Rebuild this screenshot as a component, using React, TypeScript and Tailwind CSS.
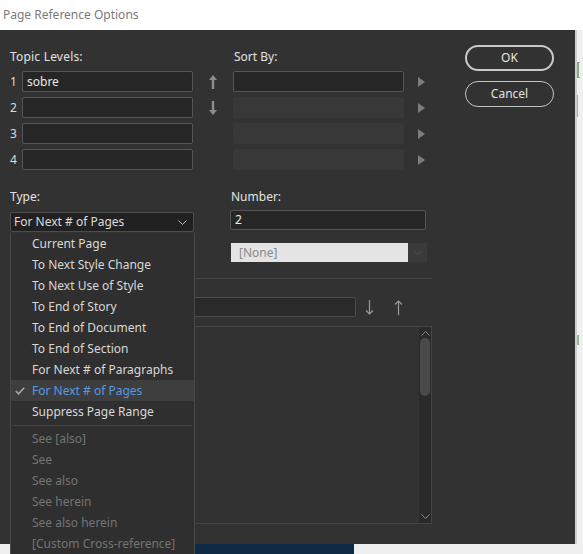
import { Fragment } from 'react';

const FONT = { fontFamily: '"Noto Sans", "Open Sans", sans-serif' };

const MENU_ITEMS = [
  'Current Page',
  'To Next Style Change',
  'To Next Use of Style',
  'To End of Story',
  'To End of Document',
  'To End of Section',
  'For Next # of Paragraphs',
  'For Next # of Pages',
  'Suppress Page Range',
];

const DISABLED_ITEMS = ['See [also]', 'See', 'See also', 'See herein', 'See also herein', '[Custom Cross-reference]'];

function ThickArrow({ up }: { up: boolean }) {
  return (
    <svg width="8" height="14" viewBox="0 0 8 14" className={up ? '' : 'rotate-180'}>
      <polygon points="0,5 4,0 8,5" fill="#8c8c8c" />
      <rect x="2.8" y="4" width="2.4" height="10" fill="#8c8c8c" />
    </svg>
  );
}

function ThinArrow({ up }: { up: boolean }) {
  return (
    <svg width="9" height="15" viewBox="0 0 9 15" className={up ? '' : 'rotate-180'}>
      <path d="M4.5 1 V15 M1 4.5 L4.5 1 L8 4.5" stroke="#9a9a9a" strokeWidth="1.2" fill="none" />
    </svg>
  );
}

function RightTriangle() {
  return (
    <svg width="7" height="10" viewBox="0 0 7 10">
      <polygon points="0,0 7,5 0,10" fill="#7c7c7c" />
    </svg>
  );
}

function Chevron({ color = '#bdbdbd', up = false }: { color?: string; up?: boolean }) {
  return (
    <svg width="9" height="5" viewBox="0 0 9 5" className={up ? 'rotate-180' : ''}>
      <path d="M0.5 0.5 L4.5 4.5 L8.5 0.5" stroke={color} strokeWidth="1" fill="none" />
    </svg>
  );
}

export default function App() {
  return (
    <div className="relative w-[583px] h-[554px] overflow-hidden bg-[#f0f0f0] text-[12px] leading-[16px]" style={FONT}>
      {/* title bar */}
      <div className="h-[30px] bg-white flex items-center pl-[3px] text-[#7a7a7a]">Page Reference Options</div>

      <div className="flex">
        {/* dialog body */}
        <div className="w-[575px] h-[514px] bg-[#323232] flex pt-[15px]">
          <div className="ml-[10px] w-[422px] pt-[4px] text-[#e2e2e2]">
            <div className="flex h-[16px]">
              <span className="w-[224px] tracking-[0.2px]">Topic Levels:</span>
              <span>Sort By:</span>
            </div>

            <div className="mt-[6px] flex flex-col gap-[5px]">
              {[1, 2, 3, 4].map((n) => (
                <div key={n} className="flex items-center h-[21px]">
                  <span className="w-[12px] text-[#dcdcdc]">{n}</span>
                  <div className="w-[171px] h-[21px] bg-[#262626] border border-[#565656] rounded-[2px] px-[4px] flex items-center text-[#e8e8e8]">
                    {n === 1 ? 'sobre' : ''}
                  </div>
                  <div className="w-[40px] flex justify-center">
                    {n === 1 && <ThickArrow up />}
                    {n === 2 && <ThickArrow up={false} />}
                  </div>
                  {n === 1 ? (
                    <div className="w-[171px] h-[21px] bg-[#262626] border border-[#565656] rounded-[2px]" />
                  ) : (
                    <div className="w-[171px] h-[21px] bg-[#383838] rounded-[2px]" />
                  )}
                  <div className="ml-[14px]">
                    <RightTriangle />
                  </div>
                </div>
              ))}
            </div>

            <div className="mt-[19px] flex">
              <div className="w-[220px]">
                <div className="h-[16px]">Type:</div>
                <div className="mt-[7px] w-[184px] h-[20px] bg-[#212121] border border-[#4c4c4c] rounded-[2px] flex items-center justify-between pl-[3px] pr-[6px] text-[#dcdcdc]">
                  <span>For Next # of Pages</span>
                  <Chevron />
                </div>
              </div>
              <div>
                <div className="h-[16px] pl-[1px]">Number:</div>
                <div className="mt-[5px] w-[196px] h-[20px] bg-[#262626] border border-[#565656] rounded-[2px] px-[4px] flex items-center text-[#f0f0f0]">
                  2
                </div>
              </div>
            </div>

            <div className="mt-[11px] ml-[221px] flex h-[19px] w-[196px]">
              <div className="flex-1 bg-[#e4e4e4] text-[#8a8a8a] flex items-center pl-[8px]">[None]</div>
              <div className="w-[19px] bg-[#3a3a3a] flex items-center justify-center">
                <Chevron color="#4e4e4e" />
              </div>
            </div>

            <div className="mt-[16px] h-px bg-[#424242]" />

            <div className="mt-[18px] flex items-center h-[20px]">
              <div className="w-[346px] h-[20px] bg-[#2a2a2a] border border-[#4c4c4c] rounded-[2px]" />
              <div className="ml-[9px]">
                <ThinArrow up={false} />
              </div>
              <div className="ml-[20px]">
                <ThinArrow up />
              </div>
            </div>

            <div className="mt-[9px] h-[198px] border border-[#454545] flex justify-end">
              <div className="w-[12px] bg-[#2a2a2a] flex flex-col items-center pt-[4px] pb-[4px]">
                <Chevron color="#888" up />
                <div className="mt-[2px] w-[10px] h-[58px] rounded-full bg-[#4a4a4a]" />
                <div className="flex-1" />
                <Chevron color="#888" />
              </div>
            </div>
          </div>

          <div className="ml-[33px] w-[89px] flex flex-col">
            <button className="h-[26px] rounded-full border-2 border-[#c9c9c9] text-[#e6e6e6]">OK</button>
            <button className="mt-[10px] h-[26px] rounded-full border border-[#c4c4c4] text-[#e0e0e0]">Cancel</button>
          </div>
        </div>

        {/* background window edge */}
        <div className="w-[2px] bg-[#cfcfcf]" />
        <div className="flex-1 flex flex-col">
          <div className="mt-[32px] w-[3px] h-[16px] border-l-2 border-t border-b border-[#7fae7f]" />
          <div className="mt-[17px] w-[1px] h-[22px] bg-[#8fbf8f]" />
          <div className="mt-[218px] w-[2px] h-[10px] bg-[#8fbf8f]" />
        </div>
      </div>

      <div className="h-[10px] flex">
        <div className="w-[195px]" />
        <div className="w-[159px] bg-[#0f2a44]" />
      </div>

      {/* open type dropdown */}
      <div className="absolute left-[10px] top-[233px] w-[185px] h-[330px] bg-[#2f2f2f] border-x border-[#484848]">
        {MENU_ITEMS.map((item) => {
          const selected = item === 'For Next # of Pages';
          return (
            <div
              key={item}
              className={`h-[21px] flex items-center ${selected ? 'bg-[#3e3e3e] text-[#559ae4]' : 'text-[#d8d8d8]'}`}
            >
              <span className="w-[21px] flex pl-[4px]">
                {selected && (
                  <svg width="10" height="8" viewBox="0 0 10 8">
                    <path d="M0.8 4 L3.6 6.8 L9.2 0.8" stroke="#a8a8a8" strokeWidth="1.6" fill="none" />
                  </svg>
                )}
              </span>
              {item}
            </div>
          );
        })}
        <div className="h-[6px] flex items-center px-[2px]">
          <div className="h-px w-full bg-[#454545]" />
        </div>
        {DISABLED_ITEMS.map((item) => (
          <Fragment key={item}>
            <div className="h-[21px] flex items-center pl-[21px] text-[#747474]">{item}</div>
          </Fragment>
        ))}
      </div>
    </div>
  );
}
